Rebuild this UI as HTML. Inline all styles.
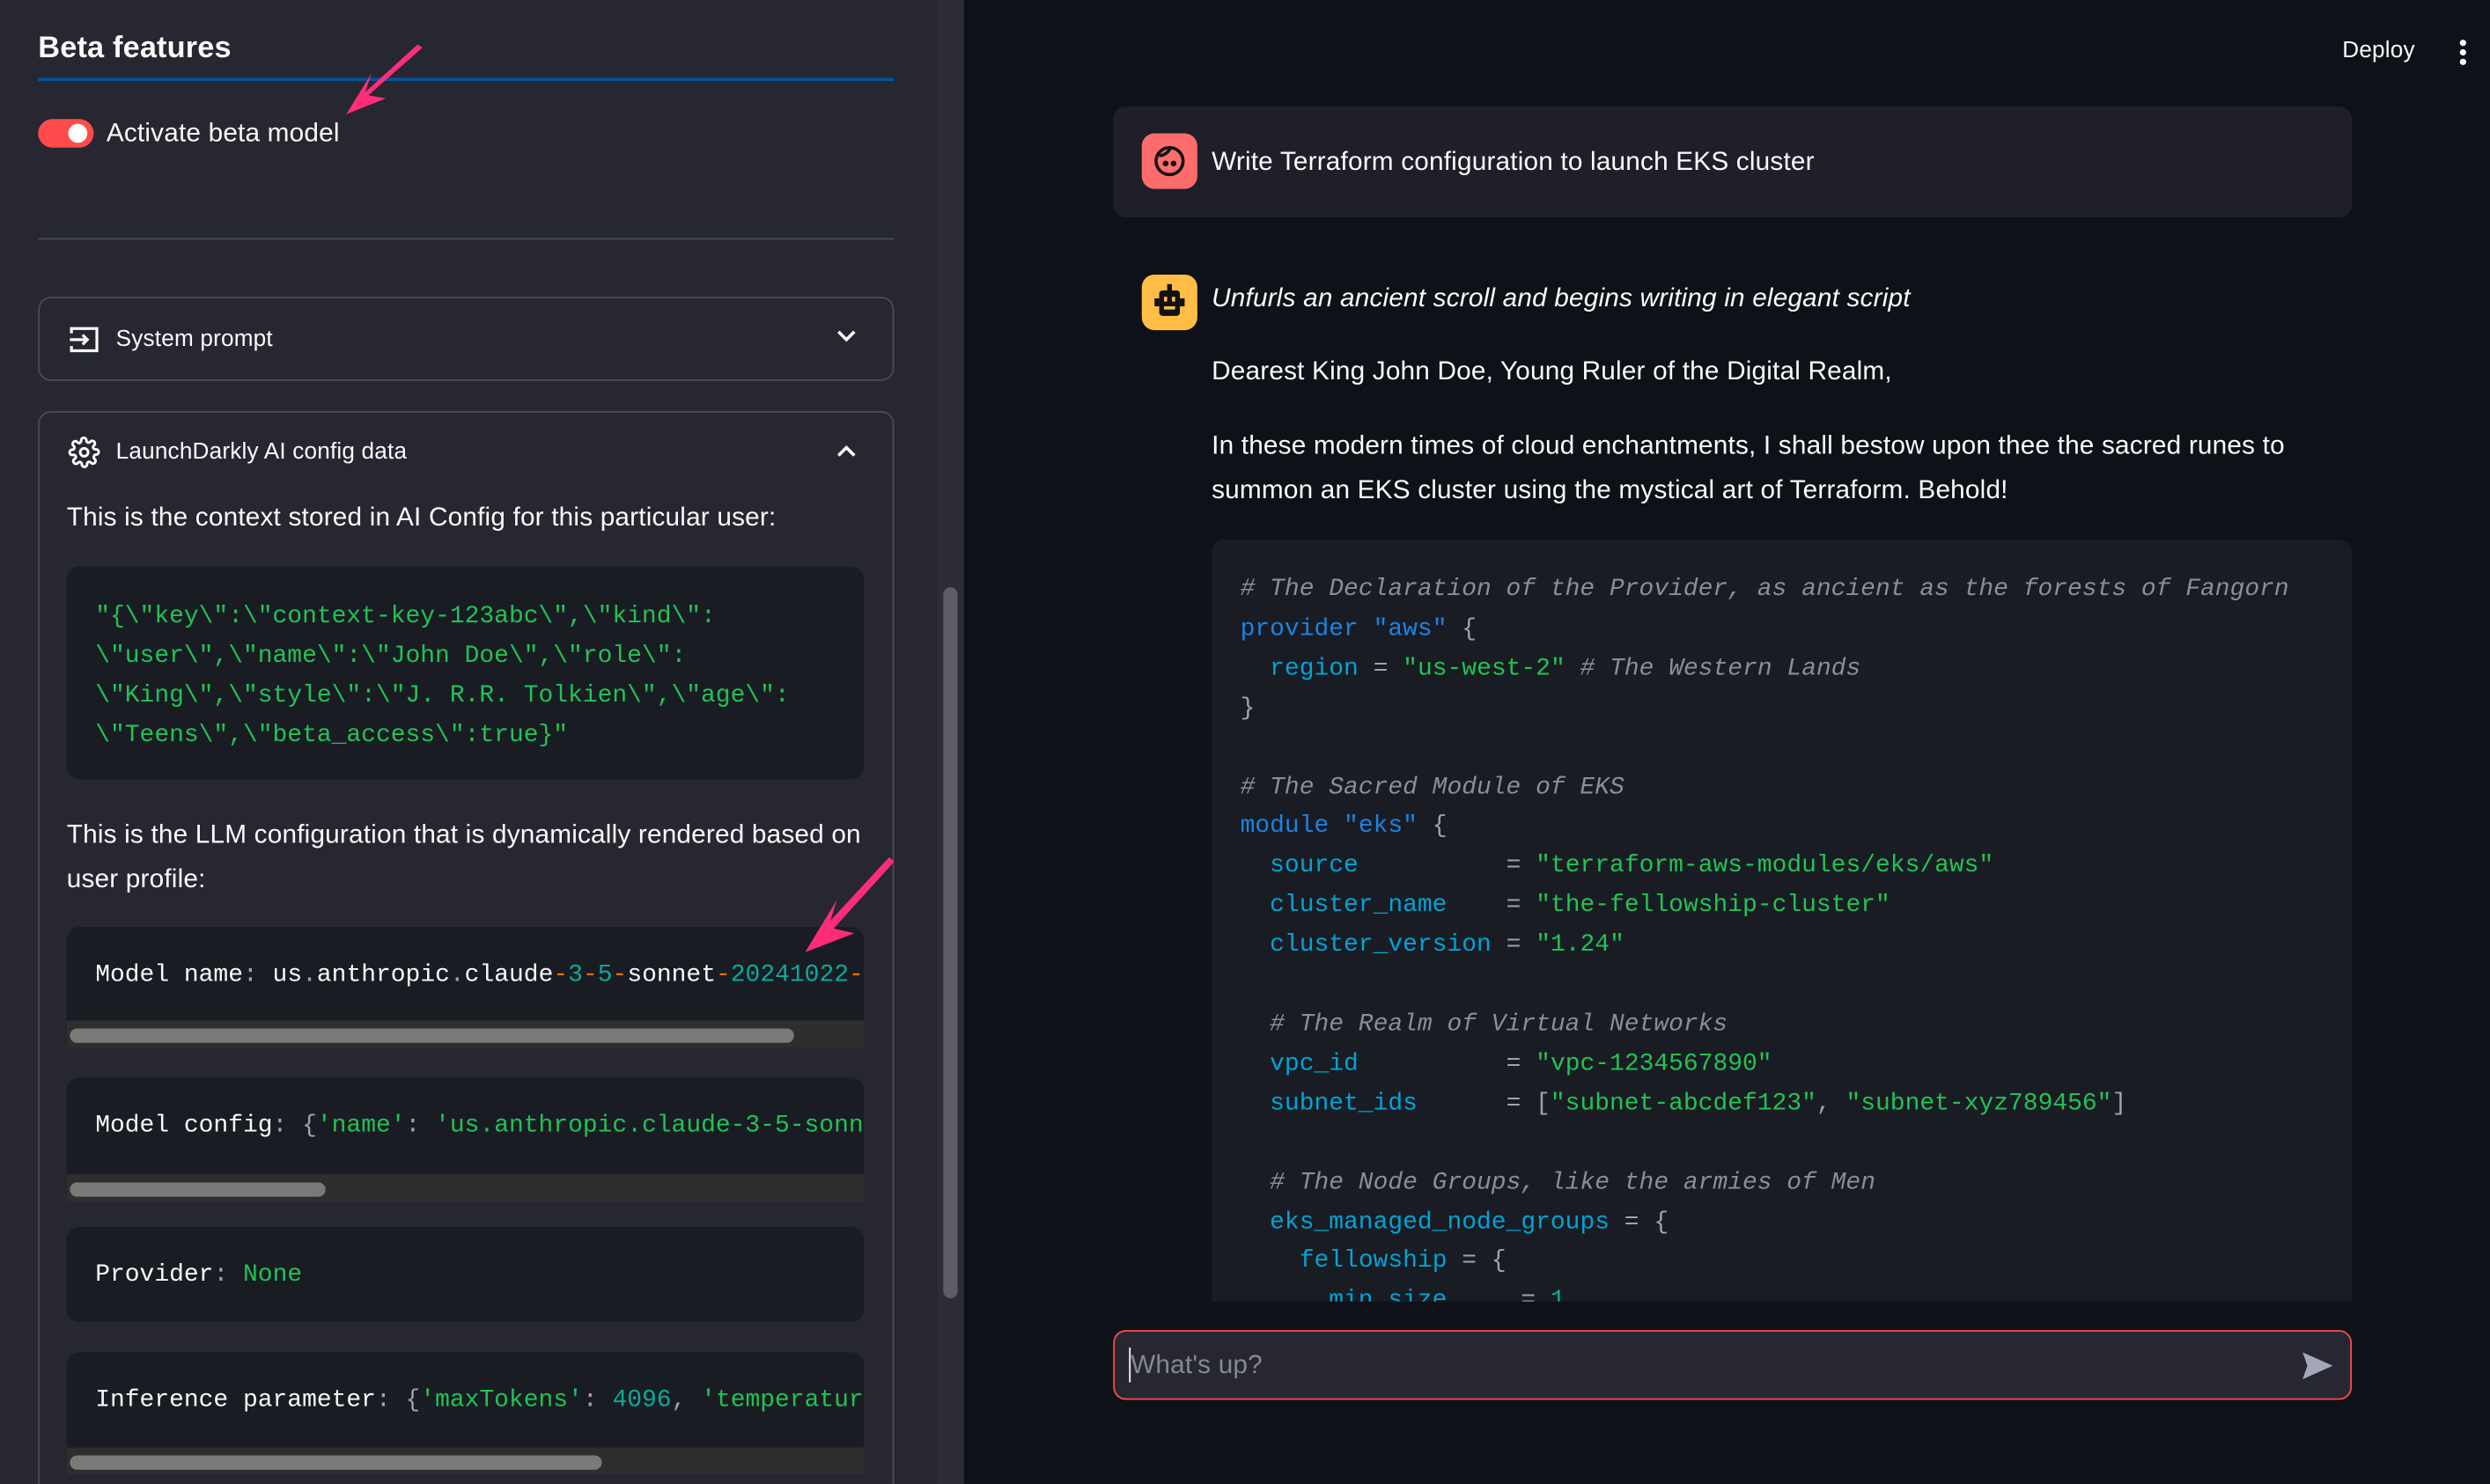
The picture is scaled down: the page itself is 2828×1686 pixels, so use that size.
<!DOCTYPE html>
<html><head><meta charset="utf-8">
<style>
html,body{margin:0;padding:0;width:2828px;height:1686px;overflow:hidden;background:#0e1117;}
#w{position:absolute;left:0;top:0;width:1568px;height:935px;overflow:hidden;transform:scale(1.80357,1.8032);transform-origin:0 0;font-family:"Liberation Sans",sans-serif;color:#fafafa;}
.a{position:absolute;}
#side{left:0;top:0;width:590px;height:935px;background:#262730;}
#sb{left:590px;top:0;width:17px;height:935px;background:#2c2d35;}
#thumb{left:594px;top:370px;width:9px;height:448px;border-radius:5px;background:#5c5d66;}
.t{white-space:nowrap;letter-spacing:0.1px;}
.mono{font-family:"Liberation Mono",monospace;font-size:15.5px;white-space:pre;}
.cb{background:#1a1c24;border-radius:8px;}
.track{background:#2e2e2e;height:17px;}
.tb{position:absolute;top:5px;height:9px;border-radius:5px;background:#7a7a7a;left:2px;}
.exp{border:1px solid #4a4b55;border-radius:8px;}
.g{color:#21c354}.k{color:#1c83e1}.c{color:#00a4d4}.p{color:#a0a3ad}.cm{color:#8b8d98;font-style:italic}.n{color:#09ab9b}.o{color:#e8730b}
</style></head><body><div id="w">
<div class="a" id="side"></div>
<div class="a" id="sb"></div>
<div class="a" id="thumb"></div>

<div class="a t" style="left:24px;top:20px;font-size:19px;font-weight:bold;">Beta features</div>
<div class="a" style="left:24px;top:49px;width:539px;height:2px;background:#0054a3;"></div>
<div class="a" style="left:24px;top:75px;width:35px;height:18px;border-radius:9px;background:#ff4b4b;"></div>
<div class="a" style="left:43px;top:78px;width:12px;height:12px;border-radius:6px;background:#fff;"></div>
<div class="a t" style="left:67px;top:75px;font-size:16.5px;">Activate beta model</div>
<div class="a" style="left:24px;top:150px;width:539px;height:1px;background:#4a4b55;"></div>

<div class="a exp" style="left:24px;top:187px;width:537px;height:51px;"></div>
<svg class="a" style="left:43px;top:205px" width="20" height="18" viewBox="0 0 20 18" fill="none" stroke="#fafafa" stroke-width="1.8"><path d="M2 5V2h16v14H2v-3"/><path d="M1 9h11M9 6l3 3-3 3"/></svg>
<div class="a t" style="left:73px;top:206px;font-size:14.5px;">System prompt</div>
<svg class="a" style="left:527px;top:207px" width="12" height="10" viewBox="0 0 12 10" fill="none" stroke="#fafafa" stroke-width="2"><path d="M1 2l5 5 5-5"/></svg>

<div class="a exp" style="left:24px;top:259px;width:537px;height:700px;"></div>
<svg class="a" style="left:43px;top:275px" width="20" height="20" viewBox="0 0 24 24" fill="none" stroke="#fafafa" stroke-width="2"><circle cx="12" cy="12" r="3"/><path d="M19.4 15a1.6 1.6 0 0 0 .3 1.8l.1.1a2 2 0 1 1-2.8 2.8l-.1-.1a1.6 1.6 0 0 0-2.7 1.1V21a2 2 0 1 1-4 0v-.1a1.6 1.6 0 0 0-2.7-1.1l-.1.1a2 2 0 1 1-2.8-2.8l.1-.1A1.6 1.6 0 0 0 3.5 14H3a2 2 0 1 1 0-4h.1a1.6 1.6 0 0 0 1.1-2.7l-.1-.1a2 2 0 1 1 2.8-2.8l.1.1A1.6 1.6 0 0 0 9.7 3.5V3a2 2 0 1 1 4 0v.1a1.6 1.6 0 0 0 2.7 1.1l.1-.1a2 2 0 1 1 2.8 2.8l-.1.1a1.6 1.6 0 0 0 1.1 2.7H21a2 2 0 1 1 0 4h-.1a1.6 1.6 0 0 0-1.5 1.3z"/></svg>
<div class="a t" style="left:73px;top:277px;font-size:14.5px;">LaunchDarkly AI config data</div>
<svg class="a" style="left:527px;top:279px" width="12" height="10" viewBox="0 0 12 10" fill="none" stroke="#fafafa" stroke-width="2"><path d="M1 8l5-5 5 5"/></svg>

<div class="a t" style="left:42px;top:317px;font-size:16.5px;">This is the context stored in AI Config for this particular user:</div>
<div class="a cb" style="left:42px;top:357px;width:502px;height:134px;"></div>
<div class="a mono g" style="left:60px;top:376px;line-height:25px;">"{\"key\":\"context-key-123abc\",\"kind\":
\"user\",\"name\":\"John Doe\",\"role\":
\"King\",\"style\":\"J. R.R. Tolkien\",\"age\":
\"Teens\",\"beta_access\":true}"</div>
<div class="a" style="left:42px;top:512px;width:505px;font-size:16.5px;line-height:28px;letter-spacing:0.1px;">This is the LLM configuration that is dynamically rendered based on user profile:</div>

<div class="a cb" style="left:42px;top:584px;width:502px;height:76px;border-radius:8px 8px 0 0;overflow:hidden;"><div class="a mono" style="left:18px;top:21px;">Model name<span class="p">:</span> us<span class="p">.</span>anthropic<span class="p">.</span>claude<span class="o">-</span><span class="n">3</span><span class="o">-</span><span class="n">5</span><span class="o">-</span>sonnet<span class="o">-</span><span class="n">20241022</span><span class="o">-</span></div></div>
<div class="a track" style="left:42px;top:643px;width:502px;"><div class="tb" style="width:456px"></div></div>

<div class="a cb" style="left:42px;top:679px;width:502px;height:78px;border-radius:8px 8px 0 0;overflow:hidden;"><div class="a mono" style="left:18px;top:21px;">Model config<span class="p">: {</span><span class="g">'name'</span><span class="p">:</span> <span class="g">'us.anthropic.claude-3-5-sonnet-20241022-v2:0'</span></div></div>
<div class="a track" style="left:42px;top:740px;width:502px;"><div class="tb" style="width:161px"></div></div>

<div class="a cb" style="left:42px;top:773px;width:502px;height:60px;"><div class="a mono" style="left:18px;top:21px;">Provider<span class="p">:</span> <span class="g">None</span></div></div>

<div class="a cb" style="left:42px;top:852px;width:502px;height:77px;border-radius:8px 8px 0 0;overflow:hidden;"><div class="a mono" style="left:18px;top:21px;">Inference parameter<span class="p">: {</span><span class="g">'maxTokens'</span><span class="p">:</span> <span class="n">4096</span><span class="p">,</span> <span class="g">'temperature'</span></div></div>
<div class="a track" style="left:42px;top:912px;width:502px;"><div class="tb" style="width:335px"></div></div>

<svg class="a" style="left:0;top:0" width="600" height="620" viewBox="0 0 600 620"><path d="M263 28 L230 58 L234 46 L218 72 L243 62 L232 60 L266 30 Z" fill="#ff2d78"/><path d="M560 540 L523 580 L527 567 L507 600 L538 588 L525 585 L563 543 Z" fill="#ff2d78"/></svg>

<div class="a t" style="left:1475px;top:24px;font-size:14.5px;">Deploy</div>
<div class="a" style="left:1549px;top:25px;width:4px;height:4px;border-radius:2px;background:#fafafa;box-shadow:0 6px 0 #fafafa,0 12px 0 #fafafa;"></div>

<div class="a" style="left:701px;top:67px;width:780px;height:70px;border-radius:8px;background:#1e1f28;"></div>
<div class="a" style="left:719px;top:84px;width:35px;height:35px;border-radius:8px;background:#ff6c6c;"></div>
<svg class="a" style="left:726px;top:91px" width="21" height="21" viewBox="0 0 21 21" fill="none" stroke="#111" stroke-width="2"><circle cx="10.5" cy="10.5" r="8.5"/><path d="M4 7c3 0 6-2 7-5"/><circle cx="8" cy="12" r=".8" fill="#111"/><circle cx="13" cy="12" r=".8" fill="#111"/></svg>
<div class="a t" style="left:763px;top:93px;font-size:16.5px;">Write Terraform configuration to launch EKS cluster</div>

<div class="a" style="left:719px;top:173px;width:35px;height:35px;border-radius:8px;background:#ffbd45;"></div>
<svg class="a" style="left:726px;top:178px" width="21" height="24" viewBox="0 0 21 24"><rect x="9" y="1" width="3" height="4" fill="#111"/><rect x="4" y="5" width="13" height="16" rx="2" fill="#111"/><rect x="1" y="10" width="3" height="5" fill="#111"/><rect x="17" y="10" width="3" height="5" fill="#111"/><rect x="7" y="9" width="2" height="3" fill="#ffbd45"/><rect x="12" y="9" width="2" height="3" fill="#ffbd45"/><rect x="7" y="15" width="7" height="2" fill="#ffbd45"/></svg>
<div class="a t" style="left:763px;top:179px;font-size:16.5px;font-style:italic;">Unfurls an ancient scroll and begins writing in elegant script</div>
<div class="a t" style="left:763px;top:225px;font-size:16.5px;">Dearest King John Doe, Young Ruler of the Digital Realm,</div>
<div class="a" style="left:763px;top:267px;width:690px;font-size:16.5px;line-height:28px;letter-spacing:0.1px;">In these modern times of cloud enchantments, I shall bestow upon thee the sacred runes to summon an EKS cluster using the mystical art of Terraform. Behold!</div>

<div class="a cb" style="left:763px;top:340px;width:718px;height:480px;border-radius:8px 8px 0 0;overflow:hidden;"><div class="a mono" style="left:18px;top:19px;line-height:24.9px;"><span class="cm"># The Declaration of the Provider, as ancient as the forests of Fangorn</span>
<span class="k">provider</span> <span class="k">"aws"</span> <span class="p">{</span>
  <span class="c">region</span> <span class="p">=</span> <span class="g">"us-west-2"</span> <span class="cm"># The Western Lands</span>
<span class="p">}</span>

<span class="cm"># The Sacred Module of EKS</span>
<span class="k">module</span> <span class="k">"eks"</span> <span class="p">{</span>
  <span class="c">source</span>          <span class="p">=</span> <span class="g">"terraform-aws-modules/eks/aws"</span>
  <span class="c">cluster_name</span>    <span class="p">=</span> <span class="g">"the-fellowship-cluster"</span>
  <span class="c">cluster_version</span> <span class="p">=</span> <span class="g">"1.24"</span>

  <span class="cm"># The Realm of Virtual Networks</span>
  <span class="c">vpc_id</span>          <span class="p">=</span> <span class="g">"vpc-1234567890"</span>
  <span class="c">subnet_ids</span>      <span class="p">= [</span><span class="g">"subnet-abcdef123"</span><span class="p">,</span> <span class="g">"subnet-xyz789456"</span><span class="p">]</span>

  <span class="cm"># The Node Groups, like the armies of Men</span>
  <span class="c">eks_managed_node_groups</span> <span class="p">= {</span>
    <span class="c">fellowship</span> <span class="p">= {</span>
      <span class="c">min_size</span>     <span class="p">=</span> <span class="n">1</span></div></div>

<div class="a" style="left:701px;top:838px;width:778px;height:42px;border:1px solid #ff4b4b;border-radius:8px;background:#262730;"></div>
<div class="a" style="left:711px;top:849px;width:1px;height:22px;background:#fafafa;"></div>
<div class="a t" style="left:712px;top:851px;font-size:16.5px;color:#868891;">What's up?</div>
<svg class="a" style="left:1449px;top:851px" width="21" height="19" viewBox="0 0 21 19"><path d="M1 1 L20 9.5 L1 18 L4 9.5 Z" fill="#a3a8b8"/></svg>
</div></body></html>
